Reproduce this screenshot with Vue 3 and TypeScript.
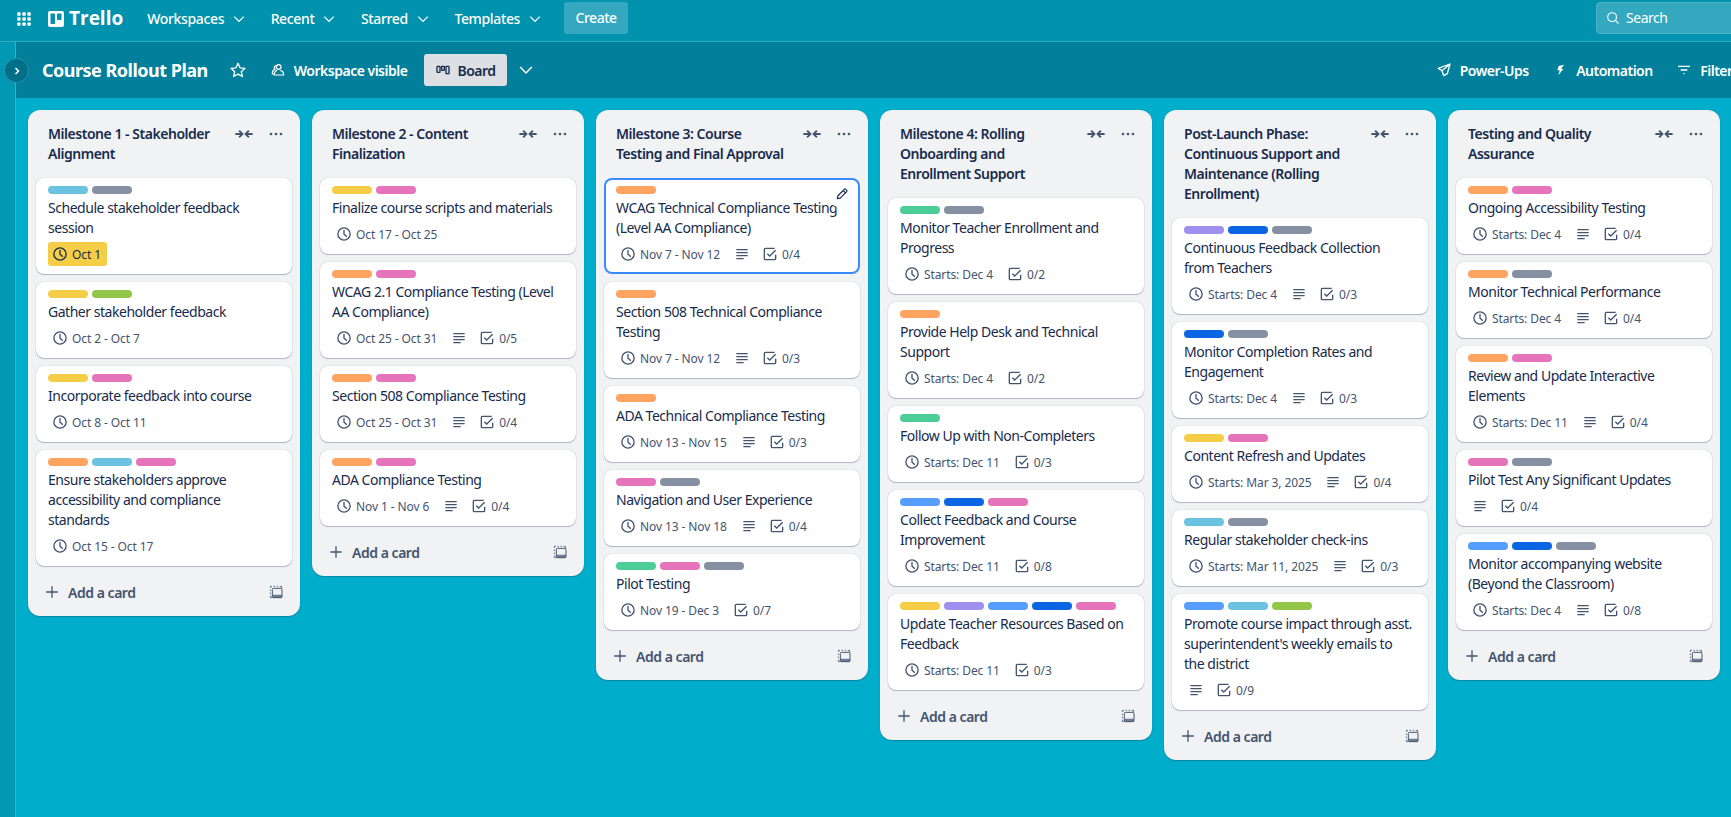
<script setup lang="ts">
interface Card {
  labels: string[]
  title: string
  date?: string
  due?: boolean
  desc?: boolean
  check?: string
  focused?: boolean
}
interface List {
  title: string
  cards: Card[]
}

const colors: Record<string, string> = {
  sky: '#6cc3e0',
  gray: '#8590a2',
  yellow: '#f5cd47',
  lime: '#94c748',
  pink: '#e774bb',
  orange: '#fea362',
  green: '#4bce97',
  purple: '#9f8fef',
  blue: '#579dff',
  navy: '#0c66e4',
}

const lists: List[] = [
  {
    title: 'Milestone 1 - Stakeholder\nAlignment',
    cards: [
      { labels: ['sky', 'gray'], title: 'Schedule stakeholder feedback\nsession', date: 'Oct 1', due: true },
      { labels: ['yellow', 'lime'], title: 'Gather stakeholder feedback', date: 'Oct 2 - Oct 7' },
      { labels: ['yellow', 'pink'], title: 'Incorporate feedback into course', date: 'Oct 8 - Oct 11' },
      { labels: ['orange', 'sky', 'pink'], title: 'Ensure stakeholders approve\naccessibility and compliance\nstandards', date: 'Oct 15 - Oct 17' },
    ],
  },
  {
    title: 'Milestone 2 - Content\nFinalization',
    cards: [
      { labels: ['yellow', 'pink'], title: 'Finalize course scripts and materials', date: 'Oct 17 - Oct 25' },
      { labels: ['orange', 'pink'], title: 'WCAG 2.1 Compliance Testing (Level\nAA Compliance)', date: 'Oct 25 - Oct 31', desc: true, check: '0/5' },
      { labels: ['orange', 'pink'], title: 'Section 508 Compliance Testing', date: 'Oct 25 - Oct 31', desc: true, check: '0/4' },
      { labels: ['orange', 'pink'], title: 'ADA Compliance Testing', date: 'Nov 1 - Nov 6', desc: true, check: '0/4' },
    ],
  },
  {
    title: 'Milestone 3: Course\nTesting and Final Approval',
    cards: [
      { labels: ['orange'], title: 'WCAG Technical Compliance Testing\n(Level AA Compliance)', date: 'Nov 7 - Nov 12', desc: true, check: '0/4', focused: true },
      { labels: ['orange'], title: 'Section 508 Technical Compliance\nTesting', date: 'Nov 7 - Nov 12', desc: true, check: '0/3' },
      { labels: ['orange'], title: 'ADA Technical Compliance Testing', date: 'Nov 13 - Nov 15', desc: true, check: '0/3' },
      { labels: ['pink', 'gray'], title: 'Navigation and User Experience', date: 'Nov 13 - Nov 18', desc: true, check: '0/4' },
      { labels: ['green', 'pink', 'gray'], title: 'Pilot Testing', date: 'Nov 19 - Dec 3', check: '0/7' },
    ],
  },
  {
    title: 'Milestone 4: Rolling\nOnboarding and\nEnrollment Support',
    cards: [
      { labels: ['green', 'gray'], title: 'Monitor Teacher Enrollment and\nProgress', date: 'Starts: Dec 4', check: '0/2' },
      { labels: ['orange'], title: 'Provide Help Desk and Technical\nSupport', date: 'Starts: Dec 4', check: '0/2' },
      { labels: ['green'], title: 'Follow Up with Non-Completers', date: 'Starts: Dec 11', check: '0/3' },
      { labels: ['blue', 'navy', 'pink'], title: 'Collect Feedback and Course\nImprovement', date: 'Starts: Dec 11', check: '0/8' },
      { labels: ['yellow', 'purple', 'blue', 'navy', 'pink'], title: 'Update Teacher Resources Based on\nFeedback', date: 'Starts: Dec 11', check: '0/3' },
    ],
  },
  {
    title: 'Post-Launch Phase:\nContinuous Support and\nMaintenance (Rolling\nEnrollment)',
    cards: [
      { labels: ['purple', 'navy', 'gray'], title: 'Continuous Feedback Collection\nfrom Teachers', date: 'Starts: Dec 4', desc: true, check: '0/3' },
      { labels: ['navy', 'gray'], title: 'Monitor Completion Rates and\nEngagement', date: 'Starts: Dec 4', desc: true, check: '0/3' },
      { labels: ['yellow', 'pink'], title: 'Content Refresh and Updates', date: 'Starts: Mar 3, 2025', desc: true, check: '0/4' },
      { labels: ['sky', 'gray'], title: 'Regular stakeholder check-ins', date: 'Starts: Mar 11, 2025', desc: true, check: '0/3' },
      { labels: ['blue', 'sky', 'lime'], title: "Promote course impact through asst.\nsuperintendent's weekly emails to\nthe district", desc: true, check: '0/9' },
    ],
  },
  {
    title: 'Testing and Quality\nAssurance',
    cards: [
      { labels: ['orange', 'pink'], title: 'Ongoing Accessibility Testing', date: 'Starts: Dec 4', desc: true, check: '0/4' },
      { labels: ['orange', 'gray'], title: 'Monitor Technical Performance', date: 'Starts: Dec 4', desc: true, check: '0/4' },
      { labels: ['orange', 'pink'], title: 'Review and Update Interactive\nElements', date: 'Starts: Dec 11', desc: true, check: '0/4' },
      { labels: ['pink', 'gray'], title: 'Pilot Test Any Significant Updates', desc: true, check: '0/4' },
      { labels: ['blue', 'navy', 'gray'], title: 'Monitor accompanying website\n(Beyond the Classroom)', date: 'Starts: Dec 4', desc: true, check: '0/8' },
    ],
  },
]

const navItems = ['Workspaces', 'Recent', 'Starred', 'Templates']
</script>

<template>
  <div class="app">
    <svg class="sprite" aria-hidden="true">
      <defs>
        <symbol id="i-clock" viewBox="0 0 24 24">
          <circle cx="12" cy="12" r="9.2" fill="none" stroke="currentColor" stroke-width="2" />
          <path d="M12 6.5V12.4L15.6 15.4" fill="none" stroke="currentColor" stroke-width="2" stroke-linecap="round" stroke-linejoin="round" />
        </symbol>
        <symbol id="i-desc" viewBox="0 0 24 24">
          <path d="M3.5 5.5H20.5M3.5 10H20.5M3.5 14.5H20.5M3.5 19H14.5" fill="none" stroke="currentColor" stroke-width="2" />
        </symbol>
        <symbol id="i-check" viewBox="0 0 24 24">
          <path d="M20.5 13V19A1.5 1.5 0 0 1 19 20.5H5A1.5 1.5 0 0 1 3.5 19V5A1.5 1.5 0 0 1 5 3.5H19" fill="none" stroke="currentColor" stroke-width="2" />
          <path d="M8 11.5L11.5 15L20.5 6.5" fill="none" stroke="currentColor" stroke-width="2" />
        </symbol>
        <symbol id="i-collapse" viewBox="0 0 24 24">
          <path d="M0.500 12H9.500M5.500 7.500L10 12L5.500 16.500M23.500 12H14.500M18.500 7.500L14 12L18.500 16.500" fill="none" stroke="currentColor" stroke-width="2.400" />
        </symbol>
        <symbol id="i-dots" viewBox="0 0 24 24">
          <circle cx="4.5" cy="12" r="2" fill="currentColor" />
          <circle cx="12" cy="12" r="2" fill="currentColor" />
          <circle cx="19.5" cy="12" r="2" fill="currentColor" />
        </symbol>
        <symbol id="i-plus" viewBox="0 0 24 24">
          <path d="M12 3.5V20.5M3.5 12H20.5" fill="none" stroke="currentColor" stroke-width="2" />
        </symbol>
        <symbol id="i-template" viewBox="0 0 24 24">
          <path d="M3.500 6V4.500A1 1 0 0 1 4.500 3.500H6M8.500 3.500H10.500M13 3.500H15M17.500 3.500H19.500A1 1 0 0 1 20.500 4.500V6M3.500 8.500V10.500M3.500 13V15M3.500 17.500V19.500A1 1 0 0 0 4.500 20.500H6" fill="none" stroke="currentColor" stroke-width="1.300" />
          <rect x="6.500" y="6.500" width="14.500" height="14" rx="1.500" fill="none" stroke="currentColor" stroke-width="1.500" />
          <rect x="6.500" y="16" width="14.500" height="4.500" rx="0.800" fill="currentColor" opacity="0.750" />
        </symbol>
        <symbol id="i-pencil" viewBox="0 0 24 24">
          <path d="M4 20L5 15L16 4A1.800 1.800 0 0 1 18.500 4L20 5.500A1.800 1.800 0 0 1 20 8L9 19Z" fill="none" stroke="currentColor" stroke-width="2" stroke-linejoin="round" />
          <path d="M14 6L18 10" fill="none" stroke="currentColor" stroke-width="2" />
        </symbol>
        <symbol id="i-chev" viewBox="0 0 24 24">
          <path d="M5 8.500L12 15.500L19 8.500" fill="none" stroke="currentColor" stroke-width="1.800" />
        </symbol>
        <symbol id="i-right" viewBox="0 0 24 24">
          <path d="M9 6L15 12L9 18" fill="none" stroke="currentColor" stroke-width="3" />
        </symbol>
        <symbol id="i-star" viewBox="0 0 24 24">
          <path d="M12 3L14.700 9.100L21.300 9.800L16.400 14.200L17.800 20.700L12 17.400L6.200 20.700L7.600 14.200L2.700 9.800L9.300 9.100Z" fill="none" stroke="currentColor" stroke-width="1.800" stroke-linejoin="round" />
        </symbol>
        <symbol id="i-people" viewBox="0 0 24 24">
          <circle cx="13" cy="7.500" r="3.500" fill="none" stroke="currentColor" stroke-width="1.800" />
          <path d="M10.500 12.500C7 13.500 6.500 16 6.500 19.500H20.500C20.500 16 19.500 13.500 15.500 12.500M9.300 5.500C6 6 5.500 9.500 7.500 11C4.500 12 3.300 14.500 3.500 18H6.500" fill="none" stroke="currentColor" stroke-width="1.800" stroke-linejoin="round" />
        </symbol>
        <symbol id="i-board" viewBox="0 0 24 24">
          <rect x="3" y="6.500" width="4.500" height="9" rx="0.800" fill="none" stroke="currentColor" stroke-width="2" />
          <rect x="10" y="6.500" width="4" height="6" rx="0.800" fill="none" stroke="currentColor" stroke-width="2" />
          <rect x="16.500" y="6.500" width="4.500" height="11" rx="0.800" fill="none" stroke="currentColor" stroke-width="2" />
        </symbol>
        <symbol id="i-rocket" viewBox="0 0 24 24">
          <path d="M21 3L3.500 9.500L9 13L11.500 20.500L17 17.500L21 3ZM9 13L21 3" fill="none" stroke="currentColor" stroke-width="2" stroke-linejoin="round" />
        </symbol>
        <symbol id="i-bolt" viewBox="0 0 24 24">
          <path d="M18 4L10 6L8 12.500H11.500L9.500 20L17 10.500H13.500Z" fill="currentColor" />
        </symbol>
        <symbol id="i-filter" viewBox="0 0 24 24">
          <path d="M3 6.500H21M7 12H17M11 17.500H13" fill="none" stroke="currentColor" stroke-width="2" />
        </symbol>
        <symbol id="i-search" viewBox="0 0 24 24">
          <circle cx="10.500" cy="10.500" r="7.500" fill="none" stroke="currentColor" stroke-width="2" />
          <path d="M16 16L21.500 21.500" fill="none" stroke="currentColor" stroke-width="2" />
        </symbol>
        <symbol id="i-grid" viewBox="0 0 24 24">
          <g fill="currentColor">
            <rect x="3" y="3" width="4.500" height="4.500" rx="1" />
            <rect x="9.800" y="3" width="4.500" height="4.500" rx="1" />
            <rect x="16.500" y="3" width="4.500" height="4.500" rx="1" />
            <rect x="3" y="9.800" width="4.500" height="4.500" rx="1" />
            <rect x="9.800" y="9.800" width="4.500" height="4.500" rx="1" />
            <rect x="16.500" y="9.800" width="4.500" height="4.500" rx="1" />
            <rect x="3" y="16.500" width="4.500" height="4.500" rx="1" />
            <rect x="9.800" y="16.500" width="4.500" height="4.500" rx="1" />
            <rect x="16.500" y="16.500" width="4.500" height="4.500" rx="1" />
          </g>
        </symbol>
      </defs>
    </svg>

    <header class="topbar">
      <svg class="grid-icon"><use href="#i-grid" /></svg>
      <svg class="logo-mark" viewBox="0 0 16 16">
        <rect width="16" height="16" rx="2" fill="#fff" />
        <rect x="2.500" y="2.500" width="4.500" height="10.500" rx="0.800" fill="#0192ad" />
        <rect x="9" y="2.500" width="4.500" height="6.500" rx="0.800" fill="#0192ad" />
      </svg>
      <span class="logo-text">Trello</span>
      <nav class="nav">
        <span v-for="item in navItems" :key="item" class="nav-item">
          {{ item }}
          <svg class="nav-chev"><use href="#i-chev" /></svg>
        </span>
      </nav>
      <span class="create">Create</span>
      <div class="search">
        <svg class="search-icon"><use href="#i-search" /></svg>
        <span>Search</span>
      </div>
    </header>

    <div class="main">
      <aside class="rail">
        <span class="rail-btn"><svg class="rail-icon"><use href="#i-right" /></svg></span>
      </aside>
      <div class="content">
        <div class="boardbar">
          <h1 class="board-name">Course Rollout Plan</h1>
          <svg class="bar-star"><use href="#i-star" /></svg>
          <span class="bar-item visible">
            <svg class="bar-icon"><use href="#i-people" /></svg>
            Workspace visible
          </span>
          <span class="board-btn">
            <svg class="board-icon"><use href="#i-board" /></svg>
            Board
          </span>
          <svg class="board-chev"><use href="#i-chev" /></svg>
          <div class="bar-right">
            <span class="bar-item">
              <svg class="bar-icon"><use href="#i-rocket" /></svg>
              Power-Ups
            </span>
            <span class="bar-item">
              <svg class="bar-icon"><use href="#i-bolt" /></svg>
              Automation
            </span>
            <span class="bar-item">
              <svg class="bar-icon"><use href="#i-filter" /></svg>
              Filters
            </span>
          </div>
        </div>

        <div class="canvas">
          <section v-for="list in lists" :key="list.title" class="list">
            <div class="list-head">
              <h2 class="list-title">{{ list.title }}</h2>
              <svg class="collapse-icon"><use href="#i-collapse" /></svg>
              <svg class="head-icon"><use href="#i-dots" /></svg>
            </div>
            <div class="cards">
              <article
                v-for="card in list.cards"
                :key="card.title"
                class="card"
                :class="{ focused: card.focused }"
              >
                <div class="labels">
                  <span
                    v-for="label in card.labels"
                    :key="label"
                    class="label"
                    :style="{ background: colors[label] }"
                  ></span>
                </div>
                <div class="card-title">{{ card.title }}</div>
                <div class="badges">
                  <span v-if="card.date" class="badge date" :class="{ due: card.due }">
                    <svg class="badge-icon"><use href="#i-clock" /></svg>
                    {{ card.date }}
                  </span>
                  <span v-if="card.desc" class="badge">
                    <svg class="badge-icon"><use href="#i-desc" /></svg>
                  </span>
                  <span v-if="card.check" class="badge">
                    <svg class="badge-icon"><use href="#i-check" /></svg>
                    {{ card.check }}
                  </span>
                </div>
                <span v-if="card.focused" class="edit">
                  <svg class="edit-icon"><use href="#i-pencil" /></svg>
                </span>
              </article>
            </div>
            <div class="list-foot">
              <svg class="plus"><use href="#i-plus" /></svg>
              <span class="add">Add a card</span>
              <svg class="tmpl"><use href="#i-template" /></svg>
            </div>
          </section>
        </div>
      </div>
    </div>
  </div>
</template>

<style>
html,
body {
  margin: 0;
  overflow: hidden;
}
</style>

<style scoped>
.app {
  width: 1731px;
  height: 817px;
  overflow: hidden;
  display: flex;
  flex-direction: column;
  font-family: 'Noto Sans', 'Open Sans', sans-serif;
  font-size: 14px;
  letter-spacing: -0.47px;
  color: #172b4d;
}
.sprite {
  display: none;
}
.topbar {
  height: 41px;
  flex: none;
  display: flex;
  align-items: center;
  background: #0192ad;
  border-bottom: 1px solid #33a8bf;
  color: #fff;
}
.grid-icon {
  width: 18px;
  height: 18px;
  margin-left: 15px;
  margin-top: -4px;
}
.logo-mark {
  width: 16px;
  height: 16px;
  margin-left: 15px;
  margin-top: -4px;
}
.logo-text {
  font-family: 'Open Sans', sans-serif;
  font-size: 19px;
  font-weight: 700;
  letter-spacing: 0;
  margin-left: 5px;
  margin-top: -5px;
}
.nav {
  display: flex;
  margin-left: 24px;
  margin-top: -4px;
  gap: 23.5px;
  font-weight: 500;
  letter-spacing: -0.35px;
}
.nav-item {
  display: flex;
  align-items: center;
  gap: 7px;
}
.nav-chev {
  width: 16px;
  height: 16px;
}
.create {
  margin-left: 21px;
  margin-top: -6px;
  width: 64px;
  height: 32px;
  line-height: 32px;
  text-align: center;
  background: #33a8bf;
  border-radius: 3px;
  font-weight: 500;
}
.search {
  margin-left: auto;
  margin-right: -70px;
  margin-top: -6px;
  width: 205px;
  height: 32px;
  box-sizing: border-box;
  display: flex;
  align-items: center;
  gap: 6px;
  padding-left: 9px;
  background: #33a8bf;
  border: 1px solid #4db3c8;
  border-radius: 4px;
}
.search-icon {
  width: 14px;
  height: 14px;
}
.main {
  flex: 1;
  min-height: 0;
  display: flex;
  position: relative;
}
.rail {
  width: 15px;
  flex: none;
  background: #0297b2;
  border-right: 1px solid #33b5cc;
}
.rail-btn {
  position: absolute;
  left: 4px;
  top: 16px;
  width: 25px;
  height: 25px;
  box-sizing: border-box;
  border-radius: 50%;
  background: #016f88;
  border: 1px solid #2a93a8;
  display: flex;
  align-items: center;
  justify-content: center;
  color: #fff;
}
.rail-icon {
  width: 12px;
  height: 12px;
}
.content {
  flex: 1;
  min-width: 0;
  display: flex;
  flex-direction: column;
}
.boardbar {
  height: 56px;
  flex: none;
  display: flex;
  align-items: center;
  background: #027f9a;
  color: #fff;
  padding-left: 26px;
}
.board-name {
  margin: 0;
  font-size: 18px;
  font-weight: 700;
  letter-spacing: -0.5px;
}
.bar-star {
  width: 18px;
  height: 18px;
  margin-left: 21px;
}
.bar-item {
  display: flex;
  align-items: center;
  gap: 8px;
  font-weight: 600;
  letter-spacing: -0.5px;
}
.bar-icon {
  width: 16px;
  height: 16px;
}
.visible {
  margin-left: 23px;
}
.board-btn {
  margin-left: 17px;
  width: 83px;
  height: 32px;
  box-sizing: border-box;
  padding-left: 11px;
  display: flex;
  align-items: center;
  gap: 6px;
  background: #dcdfe4;
  color: #172b4d;
  border-radius: 3px;
  font-weight: 600;
}
.board-icon {
  width: 16px;
  height: 16px;
}
.board-chev {
  width: 20px;
  height: 20px;
  margin-left: 9px;
}
.bar-right {
  margin-left: auto;
  margin-right: -8px;
  display: flex;
  gap: 23.5px;
}
.canvas {
  flex: 1;
  min-height: 0;
  background: #00aecc;
  display: flex;
  align-items: flex-start;
  gap: 12px;
  padding: 12px;
}
.list {
  width: 272px;
  flex: none;
  background: #f1f2f4;
  border-radius: 12px;
  box-shadow: 0 1px 1px #091e4240, 0 0 1px #091e424f;
}
.list-head {
  display: flex;
  align-items: flex-start;
  padding: 14px 16px 14px 20px;
}
.list-title {
  flex: 1;
  margin: 0;
  font-size: 14px;
  font-weight: 600;
  line-height: 20px;
  white-space: pre;
  color: #172b4d;
}
.collapse-icon {
  width: 18px;
  height: 18px;
  flex: none;
  margin-top: 1px;
  margin-right: 15px;
  color: #44546f;
}
.head-icon {
  width: 16px;
  height: 16px;
  flex: none;
  margin-top: 2px;
  color: #44546f;
}
.cards {
  display: flex;
  flex-direction: column;
  gap: 8px;
  padding: 0 8px;
}
.card {
  position: relative;
  background: #fff;
  border-radius: 8px;
  padding: 8px 12px;
  box-shadow: 0 1px 1px #091e4240, 0 0 1px #091e424f;
}
.card.focused {
  box-shadow: 0 0 0 2px #388bff inset;
}
.labels {
  display: flex;
  gap: 4px;
  margin-bottom: 4px;
}
.label {
  width: 40px;
  height: 8px;
  border-radius: 4px;
}
.card-title {
  line-height: 20px;
  white-space: pre;
  color: #172b4d;
}
.badges {
  display: flex;
  gap: 4px;
  margin-top: 4px;
  min-height: 24px;
  font-size: 12px;
  letter-spacing: -0.1px;
  color: #44546f;
}
.badge {
  display: flex;
  align-items: center;
  gap: 4px;
  height: 24px;
  padding: 0 4px;
  border-radius: 3px;
}
.date {
  padding-right: 6px;
}
.due {
  background: #f5cd47;
  color: #172b4d;
}
.badge-icon {
  width: 16px;
  height: 16px;
}
.edit {
  position: absolute;
  right: 4px;
  top: 2px;
  width: 28px;
  height: 28px;
  border-radius: 50%;
  background: #fff;
  display: flex;
  align-items: center;
  justify-content: center;
}
.edit-icon {
  width: 14px;
  height: 14px;
  color: #172b4d;
}
.list-foot {
  display: flex;
  align-items: center;
  height: 32px;
  margin-top: 10px;
  padding: 0 16px;
  padding-bottom: 8px;
  color: #44546f;
}
.plus {
  width: 16px;
  height: 16px;
}
.add {
  margin-left: 8px;
  font-weight: 600;
}
.tmpl {
  width: 16px;
  height: 16px;
  margin-left: auto;
}
</style>
